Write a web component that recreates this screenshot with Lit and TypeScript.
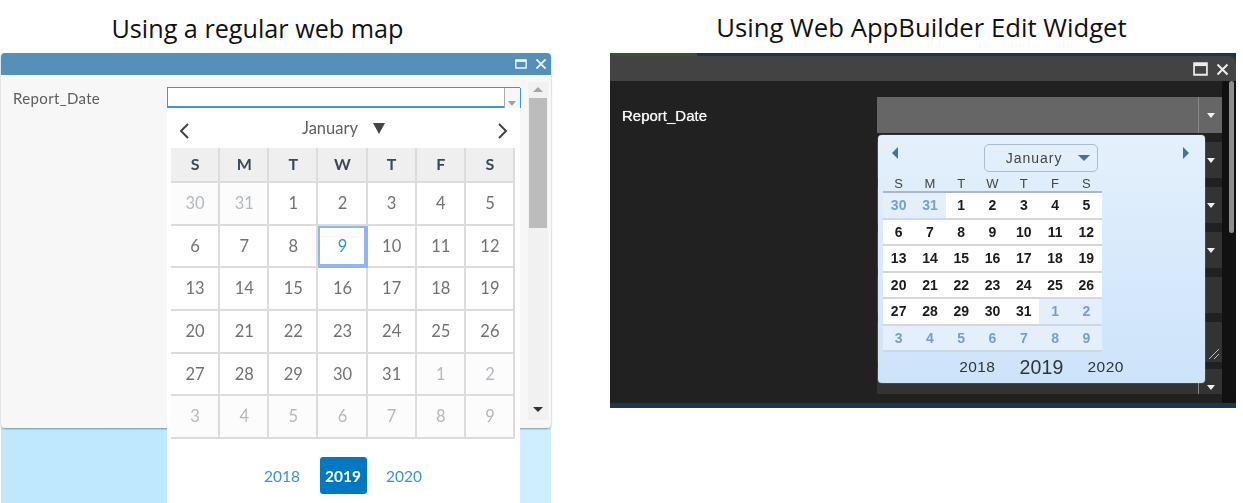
import { LitElement, html, css, svg } from "lit";
import { customElement } from "lit/decorators.js";

const WEEK = ["S", "M", "T", "W", "T", "F", "S"];
const DAYS = [30, 31, ...Array.from({ length: 31 }, (_, i) => i + 1), 1, 2, 3, 4, 5, 6, 7, 8, 9];
const isOther = (i: number) => i < 2 || i > 32;

const maxIcon = () => svg`<svg class="ic max" viewBox="0 0 14 11" preserveAspectRatio="none"><path d="M1 1h12v9H1z" fill="none" stroke="currentColor" stroke-width="1.6"/><path d="M1 2h12" stroke="currentColor" stroke-width="2.4"/></svg>`;
const closeIcon = () => svg`<svg class="ic cls" viewBox="0 0 13 13" preserveAspectRatio="none"><path d="M1.5 1.5l10 10M11.5 1.5l-10 10" stroke="currentColor" stroke-width="2" fill="none"/></svg>`;

@customElement("app-root")
export class AppRoot extends LitElement {
  static styles = css`
    :host {
      display: block;
      width: 1243px;
      height: 503px;
      overflow: hidden;
      background: #fff;
    }
    .page {
      display: grid;
      grid-template-columns: 551px 626px;
      column-gap: 58px;
      padding-left: 1px;
      height: 503px;
      font-family: "Lato", "Liberation Sans", sans-serif;
    }
    .col { position: relative; display: flex; flex-direction: column; min-width: 0; }
    .title {
      height: 53px;
      box-sizing: border-box;
      padding-top: 11px;
      font: 25.2px/34px "Open Sans", "Liberation Sans", sans-serif;
      color: #111;
      text-align: center;
      white-space: nowrap;
    }
    .l .title { padding-right: 38px; }
    .r .title { padding-right: 3px; font-size: 25.7px; }
    .ic { display: block; }

    /* left window */
    .lwin {
      height: 375px;
      width: 550px;
      background: #f7f7f7;
      border-radius: 4px;
      display: flex;
      flex-direction: column;
      box-shadow: 0 1px 2px rgba(60, 80, 90, .55);
      position: relative;
      z-index: 1;
      filter: blur(.4px);
    }
    .lhead {
      height: 22px;
      flex: none;
      background: #5490b8;
      border-radius: 4px 4px 0 0;
      color: #eef5fa;
      display: flex;
      justify-content: flex-end;
      align-items: center;
      gap: 8px;
      padding-right: 4px;
    }
    .lhead .max { width: 12px; height: 10px; }
    .lhead .cls { width: 12px; height: 12px; }
    .lbody {
      flex: 1;
      display: flex;
      padding: 7px 2px 8px 12px;
      min-height: 0;
    }
    .llabel { width: 154px; flex: none; font-size: 15px; color: #5d5d5d; padding-top: 7px; letter-spacing: .35px; }
    .linput {
      width: 353px;
      height: 21px;
      flex: none;
      box-sizing: border-box;
      margin-top: 5px;
      background: #fff;
      border: 1.5px solid #3c97d3;
      border-bottom-width: 2px;
      position: relative;
    }
    .lbtn {
      position: absolute;
      right: -1.5px;
      top: 0;
      bottom: -2px;
      width: 17px;
      background: #f7f7f7;
      border-left: 1px solid #aaa;
      border-right: 1.5px solid #3c97d3;
      box-sizing: border-box;
    }
    .lbtn::after {
      content: "";
      position: absolute;
      left: 3px;
      bottom: 2px;
      border: 4.5px solid transparent;
      border-top: 5px solid #a2a2a2;
      border-bottom: 0;
    }
    .sbar {
      width: 20px;
      margin-left: 8px;
      flex: none;
      background: #f1f1f1;
      display: flex;
      flex-direction: column;
      position: relative;
    }
    .sup { height: 16px; flex: none; position: relative; }
    .sup::after {
      content: "";
      position: absolute;
      left: 5px;
      top: 5px;
      border: 5px solid transparent;
      border-bottom: 5px solid #a5a5a5;
      border-top: 0;
    }
    .sthumb { height: 130px; flex: none; background: #bcbcbc; margin: 0 1px; }
    .sdown { margin-top: auto; height: 17px; position: relative; }
    .sdown::after {
      content: "";
      position: absolute;
      left: 5px;
      top: 4px;
      border: 5px solid transparent;
      border-top: 5px solid #333;
      border-bottom: 0;
    }
    .map {
      flex: 1;
      width: 550px;
      background: linear-gradient(90deg, #bfe8fe 0%, #c0e9fe 60%, #cfeffe 100%);
    }

    /* left calendar */
    .lcal {
      position: absolute;
      z-index: 2;
      left: 166px;
      top: 108px;
      width: 353px;
      height: 395px;
      background: #fff;
      box-sizing: border-box;
      padding: 0 5px 0 4px;
      display: flex;
      flex-direction: column;
      filter: blur(.4px);
    }
    .lmonth {
      height: 40px;
      flex: none;
      display: flex;
      align-items: center;
      justify-content: space-between;
      padding: 2px 6px 0 7px;
      box-sizing: border-box;
      color: #555;
    }
    .lmonth svg { margin-top: 3px; }
    .lmname { display: flex; align-items: center; gap: 15px; font-size: 16.5px; color: #606060; margin-top: -3px; }
    .ltri { border: 6.5px solid transparent; border-top: 11px solid #444; border-bottom: 0; margin-top: 2px; }
    .lgrid {
      display: grid;
      grid-template-columns: repeat(7, 1fr);
      grid-template-rows: 35px repeat(6, 42.7px);
    }
    .lgrid > div {
      display: flex;
      align-items: center;
      justify-content: center;
      box-sizing: border-box;
      border-right: 2px solid #dcdcdc;
      border-bottom: 2px solid #dcdcdc;
      font-size: 16.5px;
      color: #727272;
      padding: 0 0 1px 1px;
    }
    .lgrid > .wh { background: #efefef; color: #39485a; font-weight: 700; font-size: 16px; padding-bottom: 2px; }
    .lgrid > .other { background: #fcfcfc; color: #b4b8c0; }
    .lgrid > .today { box-shadow: inset 0 0 0 2px #8fb6f0; color: #2f8fd3; border-color: #8fb6f0; }
    .lyears {
      display: flex;
      justify-content: center;
      align-items: center;
      gap: 19.5px;
      margin-top: 18px;
      font-size: 15.5px;
      color: #3a93d2;
    }
    .lyears .cur {
      width: 47px;
      height: 37px;
      display: flex;
      align-items: center;
      justify-content: center;
      background: #0079c1;
      color: #fff;
      font-weight: 700;
      border-radius: 3px;
    }

    /* right window */
    .rwin {
      height: 355px;
      width: 626px;
      background: #1d3650;
      display: flex;
      flex-direction: column;
      position: relative;
      filter: blur(.4px);
    }
    .rhead {
      height: 25px;
      margin-top: 3px;
      flex: none;
      background: #434343;
      box-sizing: border-box;
      color: #ececec;
      display: flex;
      justify-content: flex-end;
      align-items: center;
      gap: 8px;
      padding: 1px 7px 0 0;
      border-top-right-radius: 8px;
      position: relative;
    }
    .rhead .max { width: 15px; height: 14px; }
    .rhead .cls { width: 13px; height: 13px; }
    .rhead::before {
      content: "";
      position: absolute;
      left: 0;
      top: -3px;
      width: 87px;
      height: 3px;
      background: #3d5030;
    }
    .rbody { flex: 1; display: flex; min-height: 0; margin-bottom: 5px; background: #212121; padding: 16px 0 0 12px; }
    .rlabel { width: 255px; flex: none; font: 400 15px/38px "Liberation Sans", sans-serif; color: #f4f4f4; text-shadow: 0 0 .7px #fff; }
    .rfields { width: 345px; flex: none; display: flex; flex-direction: column; gap: 9px; }
    .rfield { height: 36px; flex: none; background: #333; position: relative; }
    .rfield.first { background: #666; }
    .rfield.tall { height: 40px; }
    .rfield.last { height: 25px; margin-top: -2px; }
    .rfield.sel::after {
      content: "";
      position: absolute;
      right: 7px;
      top: 16px;
      border: 4.5px solid transparent;
      border-top: 5px solid #f2f2f2;
      border-bottom: 0;
    }
    .rfield.sel::before {
      content: "";
      position: absolute;
      right: 23px;
      top: 0;
      bottom: 0;
      width: 1px;
      background: #8a8a8a;
    }
    .rfield.tall svg { position: absolute; right: 2px; bottom: 2px; }
    .rthumb {
      position: absolute;
      right: 2px;
      top: 28px;
      width: 5px;
      height: 152px;
      border-radius: 3px;
      background: #8d8d8d;
    }
    .rside {
      position: absolute;
      right: 0;
      top: 28px;
      bottom: 5px;
      width: 14px;
      background: #111;
    }

    /* right calendar */
    .rcal {
      position: absolute;
      z-index: 2;
      left: 268px;
      top: 82px;
      width: 327px;
      height: 248px;
      border-radius: 4px;
      box-sizing: border-box;
      padding: 9px 0 0 5px;
      background: linear-gradient(180deg, #e4f0fc 0%, #cde3fa 100%);
      display: flex;
      flex-direction: column;
      font-family: "Liberation Sans", sans-serif;
      box-shadow: 0 0 1px #fff;
    }
    .rtop { height: 28px; flex: none; position: relative; display: flex; justify-content: center; padding-right: 7px; }
    .rprev, .rnext { position: absolute; top: 3px; }
    .rprev { left: 8px; }
    .rnext { left: 299px; }
    .rmonth {
      width: 114px;
      height: 28px;
      box-sizing: border-box;
      border: 1.5px solid #a9bcd2;
      border-radius: 5px;
      display: flex;
      align-items: center;
      justify-content: flex-end;
      gap: 15px;
      padding-right: 7px;
      font-size: 14px;
      letter-spacing: 1px;
      color: #444;
    }
    .rtri { border: 6px solid transparent; border-top: 6px solid #44729f; border-bottom: 0; }
    .rgrid {
      width: 219px;
      display: grid;
      grid-template-columns: repeat(7, 1fr);
      grid-template-rows: 18px repeat(6, 26.5px);
      margin-top: 3px;
      font-size: 14px;
      font-weight: 700;
      color: #1b1b1b;
    }
    .rgrid > div {
      display: flex;
      align-items: center;
      justify-content: center;
      box-sizing: border-box;
      border-bottom: 2px solid #d6d6d6;
      background: #fff;
    }
    .rgrid > .wh { background: transparent; color: #444; font-weight: 400; font-size: 13px; border-bottom-color: #a9b7c6; }
    .rgrid > .other { background: #e3effc; color: #74a1c9; border-bottom-color: #cdd8e4; }
    .ryears {
      flex: 1;
      display: flex;
      align-items: center;
      justify-content: center;
      gap: 24px;
      padding-right: 5px;
      padding-bottom: 1px;
      font-size: 15.5px;
      letter-spacing: .4px;
      color: #333;
    }
    .ryears .cur { font-size: 19.5px; letter-spacing: .2px; }
  `;

  private lcal() {
    return html`<div class="lcal">
      <div class="lmonth">
        <svg width="12" height="16" viewBox="0 0 12 16"><path d="M10 1L3 8l7 7" fill="none" stroke="#444" stroke-width="2"/></svg>
        <div class="lmname">January <span class="ltri"></span></div>
        <svg width="12" height="16" viewBox="0 0 12 16"><path d="M2 1l7 7-7 7" fill="none" stroke="#444" stroke-width="2"/></svg>
      </div>
      <div class="lgrid">
        ${WEEK.map((d) => html`<div class="wh">${d}</div>`)}
        ${DAYS.map((d, i) => html`<div class="${isOther(i) ? "other" : i === 10 ? "today" : ""}">${d}</div>`)}
      </div>
      <div class="lyears"><span>2018</span><span class="cur">2019</span><span>2020</span></div>
    </div>`;
  }

  private rcal() {
    return html`<div class="rcal">
      <div class="rtop">
        <svg class="rprev" width="8" height="12" viewBox="0 0 8 12"><path d="M7 0v12L1 6z" fill="#44729f"/></svg>
        <div class="rmonth">January <span class="rtri"></span></div>
        <svg class="rnext" width="8" height="12" viewBox="0 0 8 12"><path d="M1 0v12l6-6z" fill="#44729f"/></svg>
      </div>
      <div class="rgrid">
        ${WEEK.map((d) => html`<div class="wh">${d}</div>`)}
        ${DAYS.map((d, i) => html`<div class="${isOther(i) ? "other" : ""}">${d}</div>`)}
      </div>
      <div class="ryears"><span>2018</span><span class="cur">2019</span><span>2020</span></div>
    </div>`;
  }

  render() {
    return html`<div class="page">
      <section class="col l">
        <div class="title">Using a regular web map</div>
        <div class="lwin">
          <div class="lhead">${maxIcon()}${closeIcon()}</div>
          <div class="lbody">
            <div class="llabel">Report_Date</div>
            <div class="linput"><span class="lbtn"></span></div>
            <div class="sbar"><div class="sup"></div><div class="sthumb"></div><div class="sdown"></div></div>
          </div>
        </div>
        <div class="map"></div>
        ${this.lcal()}
      </section>
      <section class="col r">
        <div class="title">Using Web AppBuilder Edit Widget</div>
        <div class="rwin">
          <div class="rhead">${maxIcon()}${closeIcon()}</div>
          <div class="rbody">
            <div class="rlabel">Report_Date</div>
            <div class="rfields">
              <div class="rfield first sel"></div>
              <div class="rfield sel"></div>
              <div class="rfield sel"></div>
              <div class="rfield sel"></div>
              <div class="rfield"></div>
              <div class="rfield tall"><svg width="12" height="12" viewBox="0 0 12 12"><path d="M1 11L11 1M6 11l5-5" stroke="#bbb" stroke-width="1" fill="none"/></svg></div>
              <div class="rfield last sel"></div>
            </div>
          </div>
          <div class="rside"></div>
          <div class="rthumb"></div>
          ${this.rcal()}
        </div>
      </section>
    </div>`;
  }
}
